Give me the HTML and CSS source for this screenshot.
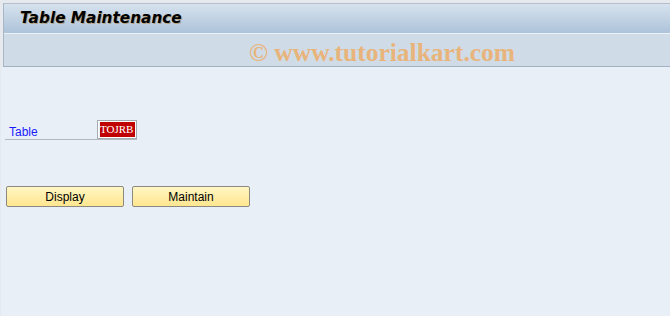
FILE: index.html
```html
<!DOCTYPE html>
<html lang="en">
<head>
    <meta charset="UTF-8">
    <title>Table Maintenance</title>
    <link rel="stylesheet" href="styles.css">
</head>
<body>
    <div class="header">
        <div class="titlebar">
            <h1>Table Maintenance</h1>
        </div>
        <div class="toolbar">
            <span class="watermark">© www.tutorialkart.com</span>
        </div>
    </div>
    <div class="content">
        <div class="field-row">
            <label class="field-label">Table</label>
            <span class="field-input">TOJRB</span>
        </div>
        <div class="button-row">
            <button class="sap-button">Display</button>
            <button class="sap-button">Maintain</button>
        </div>
    </div>
</body>
</html>
```

FILE: styles.css
```css
html, body {
    height: 100%;
}
body {
    margin: 0;
    background-color: #e6e9ed;
    font-family: 'Liberation Sans', sans-serif;
    display: flex;
    flex-direction: column;
}
.header {
    margin: 3px 0 0 3px;
    border-top: 1px solid #b4bfcb;
    border-left: 1px solid #a9b6c3;
    border-bottom: 1px solid #a3b2c2;
}
.titlebar {
    height: 29px;
    background: linear-gradient(to bottom, #d6e2ee, #adc3da);
    border-bottom: 1px solid #eef3f8;
}
.titlebar h1 {
    margin: 0;
    padding: 5px 0 0 16px;
    font-family: 'DejaVu Sans', sans-serif;
    font-size: 15.3px;
    font-weight: bold;
    font-style: italic;
    color: #000;
    text-shadow: 1px 1px 0 rgba(170, 120, 40, 0.5);
}
.toolbar {
    height: 32px;
    background-color: #cfdce7;
    display: flex;
    align-items: center;
    justify-content: center;
    padding-left: 90px;
}
.watermark {
    font-family: 'Liberation Serif', serif;
    font-weight: bold;
    font-size: 25.5px;
    color: #e8b47c;
    padding-top: 5px;
}
.content {
    flex: 1;
    margin-left: 1px;
    background-color: #e8eff7;
    padding: 53px 0 0 4px;
}
.field-row {
    display: flex;
    align-items: flex-end;
    width: 132px;
    border-bottom: 1px solid #b3b9c0;
    height: 19px;
}
.field-label {
    width: 92px;
    padding: 0 0 0 4px;
    font-size: 12px;
    color: #1a1aff;
}
.field-input {
    box-sizing: border-box;
    height: 19px;
    width: 40px;
    margin-left: -4px;
    border: 1px solid #a5aab0;
    padding: 1px 1px 1px 2px;
    font-family: 'Liberation Serif', serif;
    font-size: 11px;
    line-height: 15px;
    color: #fff;
    background-color: #c00000;
    background-clip: content-box;
    box-shadow: inset 0 0 0 1px #fff;
    white-space: nowrap;
    overflow: hidden;
}
.button-row {
    display: flex;
    gap: 8px;
    margin-top: 46px;
    padding-left: 1px;
}
.sap-button {
    width: 118px;
    height: 21px;
    margin: 0;
    padding: 0;
    border: 1px solid #8c8a80;
    border-radius: 2px;
    background: linear-gradient(to bottom, #fff6c4, #ffe68f);
    font-family: 'Liberation Sans', sans-serif;
    font-size: 12px;
    color: #000;
}
```
